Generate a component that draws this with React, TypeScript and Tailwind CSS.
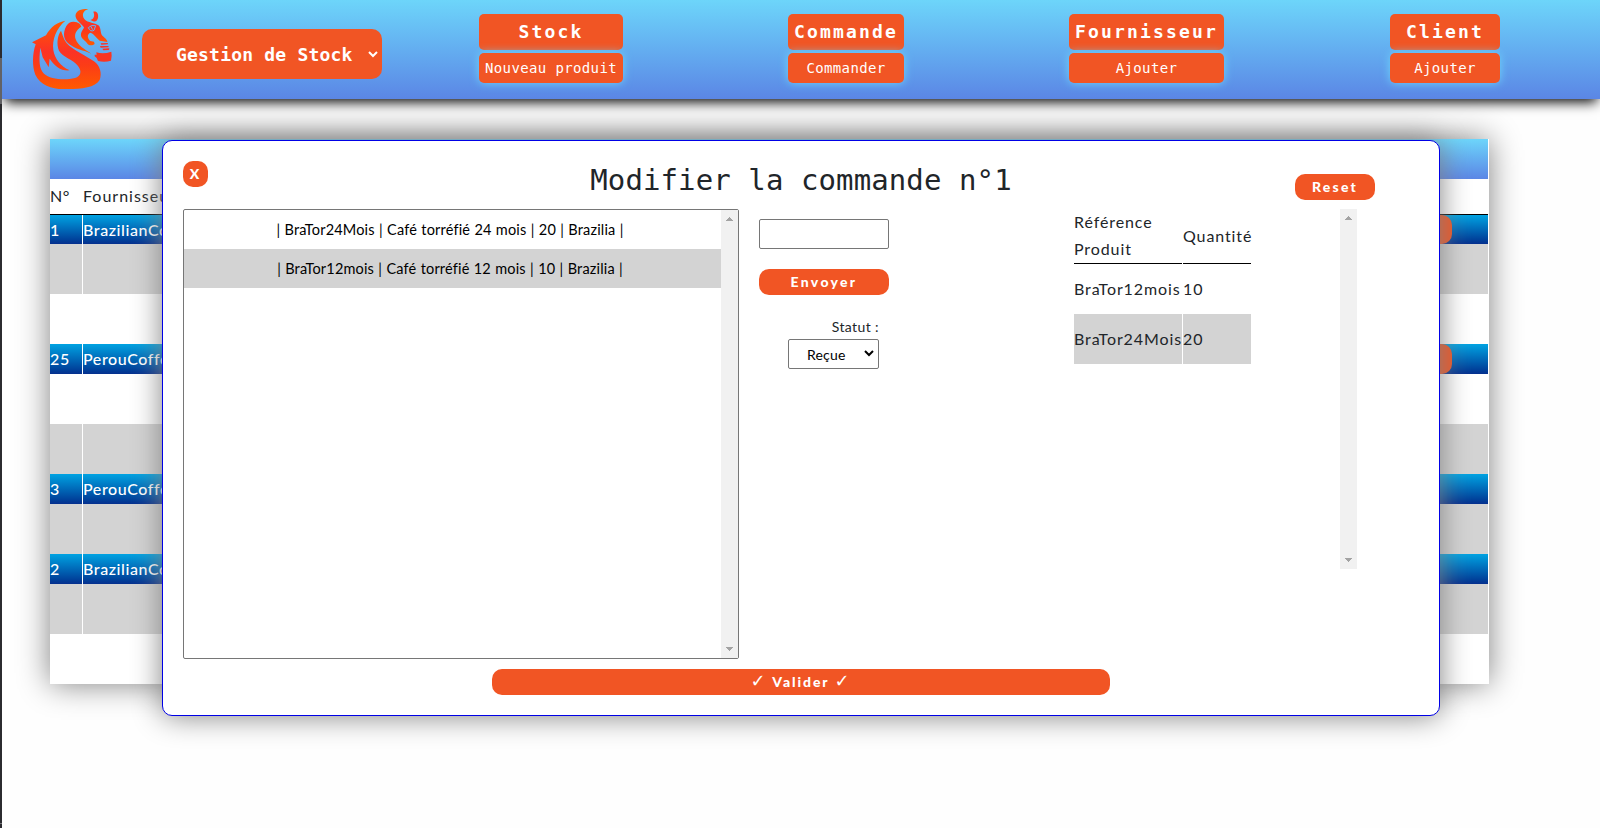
import React from "react";

const sans = "font-['Lato','Liberation_Sans',sans-serif]";
const mono = "font-['DejaVu_Sans_Mono',monospace]";

function Logo() {
  return (
    <svg className="ml-[18px] h-[99px] w-[110px] shrink-0" viewBox="0 0 330 297">
      <defs>
        <linearGradient id="flame" x1="0" y1="0" x2="0" y2="1">
          <stop offset="0" stopColor="#ff5a00" />
          <stop offset="0.45" stopColor="#fb3226" />
          <stop offset="0.65" stopColor="#fc3c17" />
          <stop offset="1" stopColor="#ff5a00" />
        </linearGradient>
        <linearGradient id="mane" x1="0" y1="0" x2="1" y2="0.2">
          <stop offset="0" stopColor="#fb3226" />
          <stop offset="1" stopColor="#ff5400" />
        </linearGradient>
      </defs>
      <g fill="url(#flame)">
        <path d="M136 62C112 66 92 80 78 106L36 127L47 133C37 160 36 200 46 224C60 255 94 267 130 267C175 268 225 265 239 240C247 220 240 197 222 184C202 168 160 152 139 128C130 116 127 102 123 92C112 107 109 132 117 152C128 172 160 178 174 198C186 214 183 228 165 234C135 242 90 238 72 221C58 207 56 183 61 143L68 172L86 202L89 176C104 199 122 213 149 211C122 199 104 176 100 150C96 118 108 86 136 62Z" />
        <path d="M180 72C165 61 147 63 139 78C127 101 131 120 148 133C166 147 190 151 214 161C194 148 174 137 167 118C162 103 168 90 184 80Z" fill="url(#mane)" />
        <path d="M205 28C181 24 164 36 167 51C171 66 187 72 192 83C187 91 181 98 183 108C187 119 195 121 200 128C204 136 216 139 224 132L222 125L211 123C202 114 200 102 212 98C222 102 227 111 239 122L262 126C263 118 250 111 245 104C241 96 243 82 235 76C225 67 204 70 193 57C184 45 190 31 205 28Z" />
        <path d="M220 35C231 33 236 41 234 54C232 61 228 67 219 64L211 60C222 57 225 47 220 35Z" fill="#fb3a22" />
        <path d="M242 130L264 129L263 133L244 134ZM240 138L266 138L265 142L242 143ZM247 146L268 145L267 150L250 151Z" fill="#fb3226" />
        <path d="M229 157Q250 164 274 155L275 167L273 182Q254 188 234 183L230 174L224 169L224 164L230 164Z" fill="#fa3522" />
      </g>
      <path d="M205 83Q213 73 227 77L222 91Q211 97 205 83M212 78L218 89" fill="none" stroke="#69aef4" strokeWidth="3" />
    </svg>
  );
}

function NavGroup({ title, action, className }: { title: string; action: string; className: string }) {
  return (
    <div className={`flex shrink-0 flex-col gap-[3px] pt-[14px] text-center text-white ${mono} ${className}`}>
      <div className="h-9 rounded-[5px] bg-[#f15524] text-[18px] font-bold leading-[35px] tracking-[2.16px] whitespace-nowrap">
        {title}
      </div>
      <div className="h-[30px] rounded-[5px] bg-[#f15524] text-[14px] leading-[31px] tracking-[0.37px] whitespace-nowrap shadow-[0_0_10px_#6dd5fa]">
        {action}
      </div>
    </div>
  );
}

const rows = [
  { kind: "blue", h: "h-[29px]", no: "1", name: "BrazilianCoffee", action: true },
  { kind: "gray", h: "h-[50px]" },
  { kind: "white", h: "h-[50px]" },
  { kind: "blue", h: "h-[30px]", no: "25", name: "PerouCoffee", action: true },
  { kind: "white", h: "h-[50px]" },
  { kind: "gray", h: "h-[50px]" },
  { kind: "blue", h: "h-[30px]", no: "3", name: "PerouCoffee" },
  { kind: "gray", h: "h-[50px]" },
  { kind: "blue", h: "h-[30px]", no: "2", name: "BrazilianCoffee" },
  { kind: "gray", h: "h-[50px]" },
  { kind: "white", h: "h-[50px]" },
];

const fills: Record<string, string> = {
  blue: "bg-linear-to-b from-[#00a3e2] to-[#052f8e]",
  gray: "bg-[#d3d3d3]",
  white: "bg-white",
};

function Orders() {
  return (
    <section className={`ml-[48px] mt-10 h-[545px] w-[1439px] bg-white pr-px text-[16px] tracking-[0.6px] shadow-[0_0_30px_gray] ${sans}`}>
      <div className="h-10 bg-linear-to-b from-[#6dd5fa] to-[#5b86e5]" />
      <div className="flex h-9 border-b border-black leading-[34px] text-[#212529]">
        <div className="mr-px w-8">N°</div>
        <div className="tracking-[1px]">Fournisseur</div>
      </div>
      {rows.map((r, i) => (
        <div key={i} className={`flex gap-px leading-[29px] text-white ${r.h}`}>
          <div className={`w-8 font-medium ${fills[r.kind]}`}>{r.no}</div>
          <div className={`flex flex-1 justify-between pr-9 font-medium ${fills[r.kind]}`}>
            <span>{r.name}</span>
            {r.action && <span className="h-full w-20 rounded-[10px] bg-[#f15524]" />}
          </div>
        </div>
      ))}
    </section>
  );
}

function Scrollbar({ className }: { className: string }) {
  return (
    <div className={`flex w-[17px] shrink-0 flex-col items-center justify-between bg-[#f1f1f1] py-[7px] ${className}`}>
      <svg width="7" height="4" viewBox="0 0 7 4" fill="#a3a3a3" shapeRendering="crispEdges">
        <path d="M3 0h1v1h1v1h1v1h1v1H0V3h1V2h1V1h1z" />
      </svg>
      <svg width="7" height="4" viewBox="0 0 7 4" fill="#a3a3a3" shapeRendering="crispEdges">
        <path d="M0 0h7v1H6v1H5v1H4v1H3V3H2V2H1V1H0z" />
      </svg>
    </div>
  );
}

function Chevron({ className }: { className: string }) {
  return (
    <svg className={className} width="10" height="7" viewBox="0 0 10 7" fill="none" stroke="currentColor" strokeWidth="2">
      <path d="M1 1l4 4 4-4" />
    </svg>
  );
}

const button =
  "block h-[26px] rounded-[10px] bg-[#f15524] text-center text-[14px] font-black leading-[26px] text-white whitespace-nowrap";

const check = "font-['DejaVu_Sans',sans-serif] text-[18px] leading-none";

function Modal() {
  return (
    <div className={`absolute left-[162px] top-[140px] h-[576px] w-[1278px] rounded-[10px] border border-[#0000e6] bg-white px-5 text-[#212529] shadow-[0_0_30px_gray] ${sans}`}>
      <div className="flex h-[68px] justify-between pt-5">
        <button className={`w-[25px] pr-[2px] ${button}`}>X</button>
        <h1 className={`ml-[99px] h-10 text-[29px] leading-[39px] tracking-[0.1px] whitespace-nowrap ${mono}`}>
          Modifier la commande n°1
        </h1>
        <button className={`mr-[44px] mt-[13px] w-20 tracking-[2.2px] ${button}`}>Reset</button>
      </div>
      <div className="flex h-[450px]">
        <div className="flex w-[556px] rounded-[2px] border border-[#767676]">
          <div className="flex-1 text-center text-[14.5px] leading-[39px] text-black">
            <div className="h-[39px] pr-[5px] tracking-[0.17px] [word-spacing:0.4px]">| BraTor24Mois | Café torréfié 24 mois | 20 | Brazilia |</div>
            <div className="h-[39px] bg-[#d3d3d3] pr-[5px] tracking-[0.17px] [word-spacing:0.4px]">| BraTor12mois | Café torréfié 12 mois | 10 | Brazilia |</div>
          </div>
          <Scrollbar className="" />
        </div>
        <div className="ml-5 w-[130px] pt-[10px] text-[14px]">
          <div className="h-[30px] rounded-[2px] border border-[#767676]" />
          <button className={`mt-5 w-full tracking-[2.3px] ${button}`}>Envoyer</button>
          <div className="mr-[10px] mt-[20px] h-6 text-right leading-6 tracking-[0.4px]">Statut :</div>
          <div className="ml-[29px] flex h-[30px] w-[91px] items-center justify-between rounded-[2px] border border-[#767676] pl-[18px] pr-1 pt-px text-black">
            <span className="tracking-[0.2px]">Reçue</span>
            <Chevron className="mb-[3px]" />
          </div>
        </div>
        <div className="ml-[185px] w-[177px] text-[16px] tracking-[0.9px]">
          <div className="flex h-[55px] gap-px">
            <div className="w-[108px] border-b border-black leading-[27px]">
              <div className="-mt-px">Référence Produit</div>
            </div>
            <div className="w-[68px] border-b border-black leading-[54px]">Quantité</div>
          </div>
          <div className="flex h-[50px] gap-px leading-[50px]">
            <div className="w-[108px]">BraTor12mois</div>
            <div className="w-[68px]">10</div>
          </div>
          <div className="flex h-[50px] gap-px leading-[49px]">
            <div className="w-[108px] bg-[#d3d3d3]">BraTor24Mois</div>
            <div className="w-[68px] bg-[#d3d3d3]">20</div>
          </div>
        </div>
        <Scrollbar className="ml-[89px] h-[360px]" />
      </div>
      <button className={`mx-auto mt-[10px] w-[618px] tracking-[1.9px] ${button}`}>
        <span className={check}>✓</span> Valider <span className={check}>✓</span>
      </button>
    </div>
  );
}

export default function App() {
  return (
    <div className="relative flex h-[828px] w-[1600px] overflow-hidden bg-[#fefefe]">
      <div className="flex w-[2px] shrink-0 flex-col bg-[#2b2b2f]">
        <div className="mt-[58px] h-[46px] bg-[#626266]" />
        <div className="mt-[719px] h-px bg-[#77777a]" />
      </div>
      <div className="h-full w-[1598px] overflow-hidden">
        <header className="flex h-[99px] bg-linear-to-b from-[#6dd5fa] to-[#5b86e5] shadow-[0_6px_12px_-3px_black]">
          <Logo />
          <div className={`ml-3 mt-[29px] flex h-[50px] w-60 shrink-0 items-center justify-between rounded-[10px] bg-[#f15524] pl-[34px] pr-1 text-[18px] font-bold tracking-[0.2px] text-white whitespace-nowrap ${mono}`}>
            <span>Gestion de Stock</span>
            <Chevron className="" />
          </div>
          <NavGroup className="ml-[97px] w-36" title="Stock" action="Nouveau produit" />
          <NavGroup className="ml-[165px] w-[116px]" title="Commande" action="Commander" />
          <NavGroup className="ml-[165px] w-[155px]" title="Fournisseur" action="Ajouter" />
          <NavGroup className="ml-[166px] w-[110px]" title="Client" action="Ajouter" />
        </header>
        <Orders />
      </div>
      <Modal />
    </div>
  );
}
